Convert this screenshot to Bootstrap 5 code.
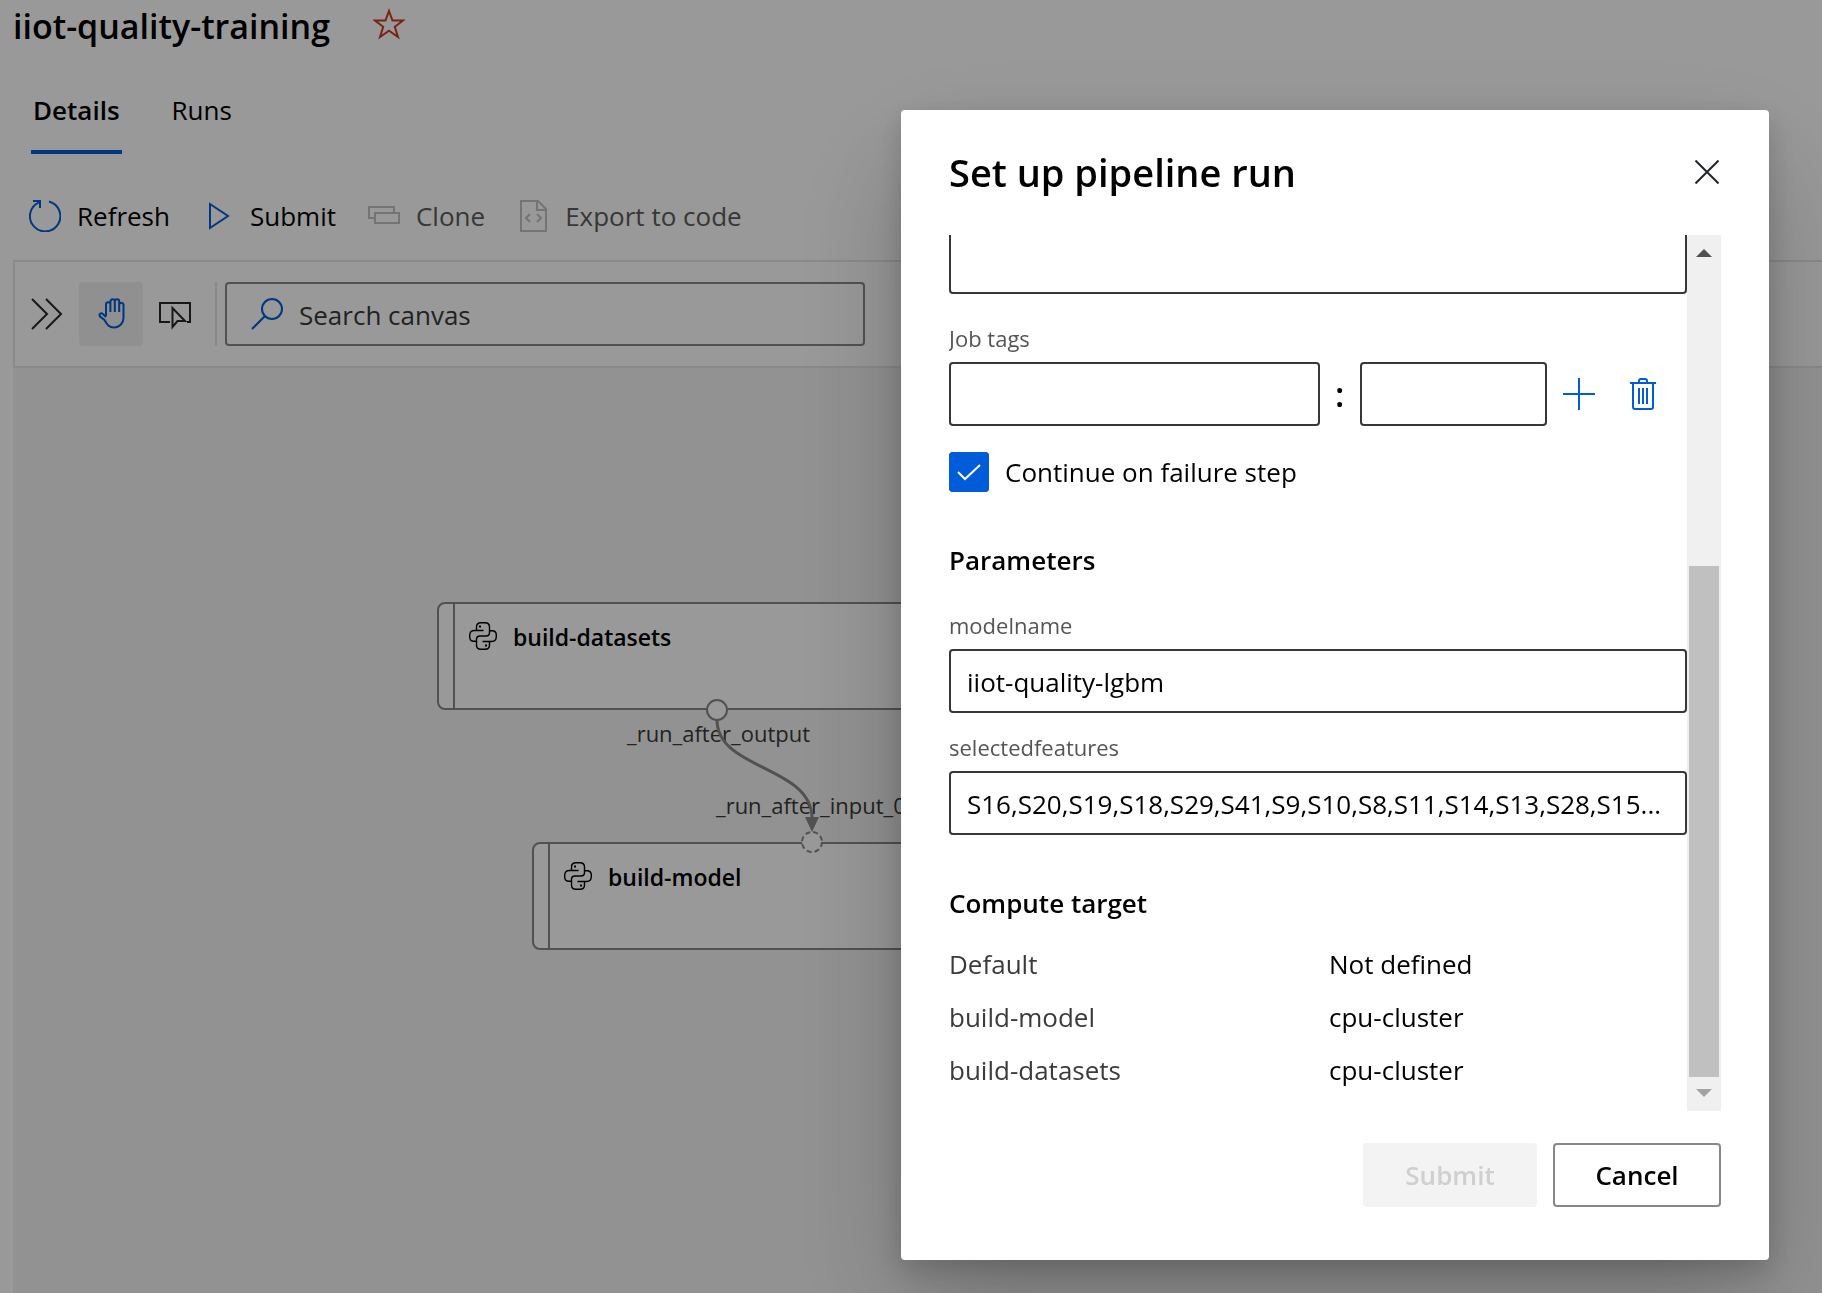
<!DOCTYPE html>
<html lang="en">
<head>
<meta charset="utf-8">
<meta name="viewport" content="width=device-width, initial-scale=1">
<title>iiot-quality-training</title>
<link rel="stylesheet" href="https://cdn.jsdelivr.net/npm/bootstrap@5.3.0/dist/css/bootstrap.min.css">
<style>
  :root { --brand: #015cda; --ink: #000; --soft: #555; --line: #e6e6e6; }
  body { font-family: "Segoe UI", "Open Sans", "Noto Sans", sans-serif; font-size: 26px; line-height: 36px; color: var(--ink); background: #fff; }
  svg { display: block; flex: none; fill: none; stroke: currentColor; stroke-width: 2; }
  .page-head { padding-left: 13px; gap: 43px; }
  .page-title { font-size: 34px; line-height: 52px; font-weight: 600; }
  .star { color: #cf3a1c; }
  .page-tabs { margin: 26px 0 0 31px; gap: 48px; }
  .page-tabs .nav-link { color: inherit; padding: 14px 2px 22px; border-bottom: 4px solid transparent; }
  .page-tabs .nav-link.active { font-weight: 600; border-color: var(--brand); }
  .commands { padding: 30px 0 12px 29px; gap: 32px; }
  .commands .btn { height: 64px; gap: 16px; font-size: inherit; line-height: 36px; color: var(--ink); border: 0; }
  .commands .btn svg { color: var(--brand); }
  .commands .btn:disabled { color: #5c5c5c; opacity: 1; }
  .commands .btn:disabled svg { color: #c2c2c2; }
  .workspace { margin-left: 13px; }
  .canvas-bar { border: 2px solid var(--line); border-right: 0; padding: 20px 0; }
  .tool { width: 64px; height: 64px; border: 0; border-radius: 4px; color: #292827; }
  .tool.active { background: #f0f0f0; color: var(--brand); }
  .bar-rule { width: 2px; height: 64px; margin: 0 8px; background: var(--line); }
  .search-box { width: 640px; height: 64px; border: 2px solid #8a8886; border-radius: 4px; padding-left: 24px; gap: 16px; }
  .search-box svg { color: var(--brand); }
  .search-box input, .field { font-size: inherit; color: var(--ink); }
  .search-box input { border: 0; padding: 2px 0 0; height: 60px; box-shadow: none; }
  .search-box input::placeholder { color: #3b3a39; opacity: 1; }
  .graph { background: #f4f4f4; overflow: hidden; }
  .step { position: absolute; width: 560px; height: 108px; background: #fff; border: 2px solid #8a8886; border-radius: 8px; font-size: 23px; line-height: 30px; font-weight: 600; }
  .step::before { content: ""; width: 16px; border-right: 2px solid #8a8886; }
  .step-head { padding: 18px 14px; gap: 16px; }
  .step svg { stroke-width: 1.4; color: #000; }
  .port-name { position: absolute; font-size: 22px; line-height: 28px; color: #3b3a39; }
  .wires { position: absolute; left: 0; top: 0; width: 100%; height: 100%; color: #8a8886; }
  .modal { background: rgba(0, 0, 0, .4); }
  .modal-dialog { max-width: 868px; margin: 110px 53px 33px auto; }
  .modal-content { border: 0; border-radius: 4px; padding: 32px 48px 53px; box-shadow: 0 51px 115px rgba(0, 0, 0, .22), 0 10px 29px rgba(0, 0, 0, .18); }
  .modal-title { font-size: 38px; line-height: 60px; font-weight: 600; }
  .close-btn { border: 0; padding: 2px; }
  .scroll-area { height: 876px; margin-top: 33px; }
  .field { height: 64px; border: 2px solid #383736; border-radius: 4px; padding: 2px 16px 0; text-overflow: ellipsis; }
  .form-stack > * { flex-shrink: 0; }
  .notes { height: 140px; resize: none; margin-bottom: 28px; }
  .field-label { font-size: 22px; line-height: 32px; color: var(--soft); margin: 0 0 8px; }
  .section-title { font-size: 26px; line-height: 36px; font-weight: 600; margin: 50px 0 0; }
  .tag-row { margin-bottom: 26px; padding-right: 12px; }
  .tag-key, .tag-value { padding: 0; min-width: 0; }
  .tag-key { flex: 2 1 0; }
  .tag-value { flex: 1 1 0; }
  .tag-sep { width: 40px; text-align: center; font-size: 34px; font-weight: 600; }
  .icon-btn { border: 0; padding: 0; color: var(--brand); width: 64px; height: 64px; }
  .tick { width: 40px; height: 40px; margin: 0; border-radius: 4px; }
  .form-check-input.tick { border-radius: 3px; }
  .tick:checked { border-color: var(--brand); background-color: var(--brand); background-size: 32px; background-image: url("data:image/svg+xml,%3Csvg xmlns='http://www.w3.org/2000/svg' viewBox='0 0 32 32'%3E%3Cpath fill='none' stroke='%23fff' stroke-width='2' d='M5 16l7 7L27 9'/%3E%3C/svg%3E"); }
  .model-name { margin-bottom: 18px; }
  .parameters { margin-bottom: 31px; }
  .targets { line-height: 53px; margin: 17px 0 14px; }
  .targets dt { font-weight: 400; color: #3b3b3b; width: 380px; }
  .scroll-track { width: 34px; background: #f0f0f0; padding: 14px 2px; }
  .scroll-track svg { stroke: none; }
  .scroll-thumb { height: 511px; background: #c0c0c0; margin: auto 0 12px; }
  .foot { margin-top: 32px; gap: 16px; }
  .foot .btn { height: 64px; border-radius: 4px; font-size: inherit; font-weight: 600; border-width: 2px; }
  .foot .go { width: 174px; background: #f3f3f3; border-color: #f3f3f3; color: #cfcfcf; opacity: 1; }
  .foot .stop { width: 168px; background: #fff; border-color: #8a8886; color: #000; }
</style>
<script src="https://cdn.jsdelivr.net/npm/bootstrap@5.3.0/dist/js/bootstrap.bundle.min.js"></script>
</head>
<body class="overflow-hidden">
<svg width="0" height="0" class="position-absolute" aria-hidden="true">
  <symbol id="snake" viewBox="0 0 28 28">
    <g id="half">
      <path d="M14.500 8.500H5.500Q.700 8.500.700 13.500V15Q.700 19.300 5 19.300H7.500M7.500 8.500V5Q7.500.700 12 .700H16Q20.500.700 20.500 5V10.500Q20.500 14 17 14H14"/>
      <rect x="10" y="3.500" width="2" height="2" fill="currentColor" stroke="none"/>
    </g>
    <use href="#half" transform="rotate(180 14 14)"/>
  </symbol>
</svg>

<div class="d-flex flex-column vh-100">
  <header class="page-head d-flex align-items-start">
    <h1 class="page-title mb-0">iiot-quality-training</h1>
    <button class="btn star border-0 p-0 mt-2" aria-label="Add to favourites">
      <svg width="32" height="32" viewBox="0 0 32 32"><path d="M16 3l3.500 9.500H30l-8.200 6.300L25 29l-9-6.200L7 29l3.200-10.200L2 12.500h10.500z"/></svg>
    </button>
  </header>

  <nav class="nav page-tabs">
    <a class="nav-link active" href="#details">Details</a>
    <a class="nav-link" href="#runs">Runs</a>
  </nav>

  <div class="commands d-flex align-items-center">
    <button class="btn p-0 d-flex align-items-center">
      <svg width="32" height="32" viewBox="0 0 32 32"><path d="M20 1.500A15.200 15.200 0 1 1 10 2.300M4 1h7v7"/></svg>Refresh</button>
    <button class="btn p-0 d-flex align-items-center">
      <svg width="32" height="32" viewBox="0 0 32 32"><path d="M8 4v24l18-12z"/></svg>Submit</button>
    <button class="btn p-0 d-flex align-items-center" disabled>
      <svg width="32" height="32" viewBox="0 0 32 32"><path d="M6 18H1V7h25v6M7 13h24v10H7z"/></svg>Clone</button>
    <button class="btn p-0 d-flex align-items-center" disabled>
      <svg width="32" height="32" viewBox="0 0 32 32"><path d="M4 1h17l8 8v22H4zM20 1v9h9M13 14l-4 4 4 4M20 14l4 4-4 4"/></svg>Export to code</button>
  </div>

  <main class="workspace flex-fill d-flex flex-column">
    <div class="canvas-bar bg-white d-flex align-items-center">
      <button class="tool btn p-3" aria-label="Expand panel"><svg width="32" height="32" viewBox="0 0 32 32"><path d="M1 1l15 15L1 31M15 1l15 15-15 15"/></svg></button>
      <button class="tool btn p-3 active" aria-label="Pan"><svg width="32" height="32" viewBox="-3 0 32 32"><path d="M8 18V6.500a2.200 2.200 0 0 1 4.400 0V14V3.500a2.200 2.200 0 0 1 4.400 0V14V3.500a2.200 2.200 0 0 1 4.400 0V14V6.500a2.200 2.200 0 0 1 4.300 0V20a9.500 9.500 0 0 1-9.500 9.500c-5 0-7-3-9.500-7.500L2 18.500c-1.500-2.500 1-4 3-2.500L8 19"/></svg></button>
      <button class="tool btn p-3" aria-label="Select"><svg width="32" height="32" viewBox="0 0 32 32"><path d="M11 24H1V5h30v19h-3M13.500 10v19l5-6H26z"/></svg></button>
      <span class="bar-rule"></span>
      <label class="search-box d-flex align-items-center">
        <svg width="32" height="32" viewBox="0 0 32 32"><circle cx="21" cy="11" r="10"/><path d="M14 18L1 31"/></svg>
        <input class="form-control bg-transparent" type="search" placeholder="Search canvas" aria-label="Search canvas">
      </label>
    </div>

    <div class="graph position-relative flex-fill">
      <div class="step d-flex" style="left:424px;top:234px"><div class="step-head d-flex align-items-start"><svg width="28" height="28"><use href="#snake"/></svg>build-datasets</div></div>
      <div class="step d-flex" style="left:519px;top:474px"><div class="step-head d-flex align-items-start"><svg width="28" height="28"><use href="#snake"/></svg>build-model</div></div>
      <span class="port-name" style="left:614px;top:351px">_run_after_output</span>
      <span class="port-name" style="left:703px;top:423px">_run_after_input_0</span>
      <svg class="wires">
        <path stroke-width="3" d="M704 352C704 402 799 398 799 450"/>
        <path fill="currentColor" stroke="none" d="M792 449h14l-7 15z"/>
        <circle cx="704" cy="342" r="10" fill="#fff"/>
        <circle cx="799" cy="474" r="10" fill="#fff" stroke-dasharray="5 3"/>
      </svg>
    </div>
  </main>
</div>

<div class="modal d-block" role="dialog" aria-labelledby="runTitle">
  <div class="modal-dialog">
    <div class="modal-content">
      <div class="d-flex justify-content-between align-items-center">
        <h2 class="modal-title" id="runTitle">Set up pipeline run</h2>
        <button class="btn close-btn" aria-label="Close"><svg width="24" height="24" viewBox="0 0 24 24"><path d="M.500.500l23 23M23.500.500l-23 23"/></svg></button>
      </div>

      <div class="scroll-area d-flex">
        <div class="form-stack flex-fill d-flex flex-column justify-content-end overflow-hidden">
          <textarea class="form-control field notes" aria-label="Job description"></textarea>
          <label class="field-label" for="tagKey">Job tags</label>
          <div class="tag-row d-flex align-items-center">
            <input class="form-control field tag-key" id="tagKey">
            <span class="tag-sep">:</span>
            <input class="form-control field tag-value" aria-label="Tag value">
            <button class="btn icon-btn d-flex align-items-center justify-content-center" aria-label="Add tag"><svg width="32" height="32" viewBox="0 0 32 32"><path d="M16 0v32M0 16h32"/></svg></button>
            <button class="btn icon-btn d-flex align-items-center justify-content-center" aria-label="Delete tag"><svg width="32" height="32" viewBox="0 0 32 32"><path d="M3 5h26M6 5v24q0 2 2 2h16q2 0 2-2V5M12 5V3q0-2 2-2h4q2 0 2 2v2M12 10v16M16 10v16M20 10v16"/></svg></button>
          </div>
          <div class="d-flex align-items-center gap-3">
            <input class="form-check-input tick" type="checkbox" id="goOn" checked>
            <label for="goOn">Continue on failure step</label>
          </div>
          <h3 class="section-title parameters">Parameters</h3>
          <label class="field-label" for="modelName">modelname</label>
          <input class="form-control field model-name" id="modelName" value="iiot-quality-lgbm">
          <label class="field-label" for="features">selectedfeatures</label>
          <input class="form-control field" id="features" value="S16,S20,S19,S18,S29,S41,S9,S10,S8,S11,S14,S13,S28,S15...">
          <h3 class="section-title">Compute target</h3>
          <dl class="targets">
            <div class="d-flex"><dt>Default</dt><dd class="mb-0">Not defined</dd></div>
            <div class="d-flex"><dt>build-model</dt><dd class="mb-0">cpu-cluster</dd></div>
            <div class="d-flex"><dt>build-datasets</dt><dd class="mb-0">cpu-cluster</dd></div>
          </dl>
        </div>
        <div class="scroll-track flex-shrink-0 d-flex flex-column" aria-hidden="true">
          <svg class="align-self-center" width="16" height="8"><path fill="#505050" d="M8 0l8 8H0z"/></svg>
          <div class="scroll-thumb"></div>
          <svg class="align-self-center" width="16" height="8"><path fill="#a3a3a3" d="M0 0h16L8 8z"/></svg>
        </div>
      </div>

      <div class="foot d-flex justify-content-end">
        <button class="btn go" disabled>Submit</button>
        <button class="btn stop">Cancel</button>
      </div>
    </div>
  </div>
</div>
</body>
</html>
